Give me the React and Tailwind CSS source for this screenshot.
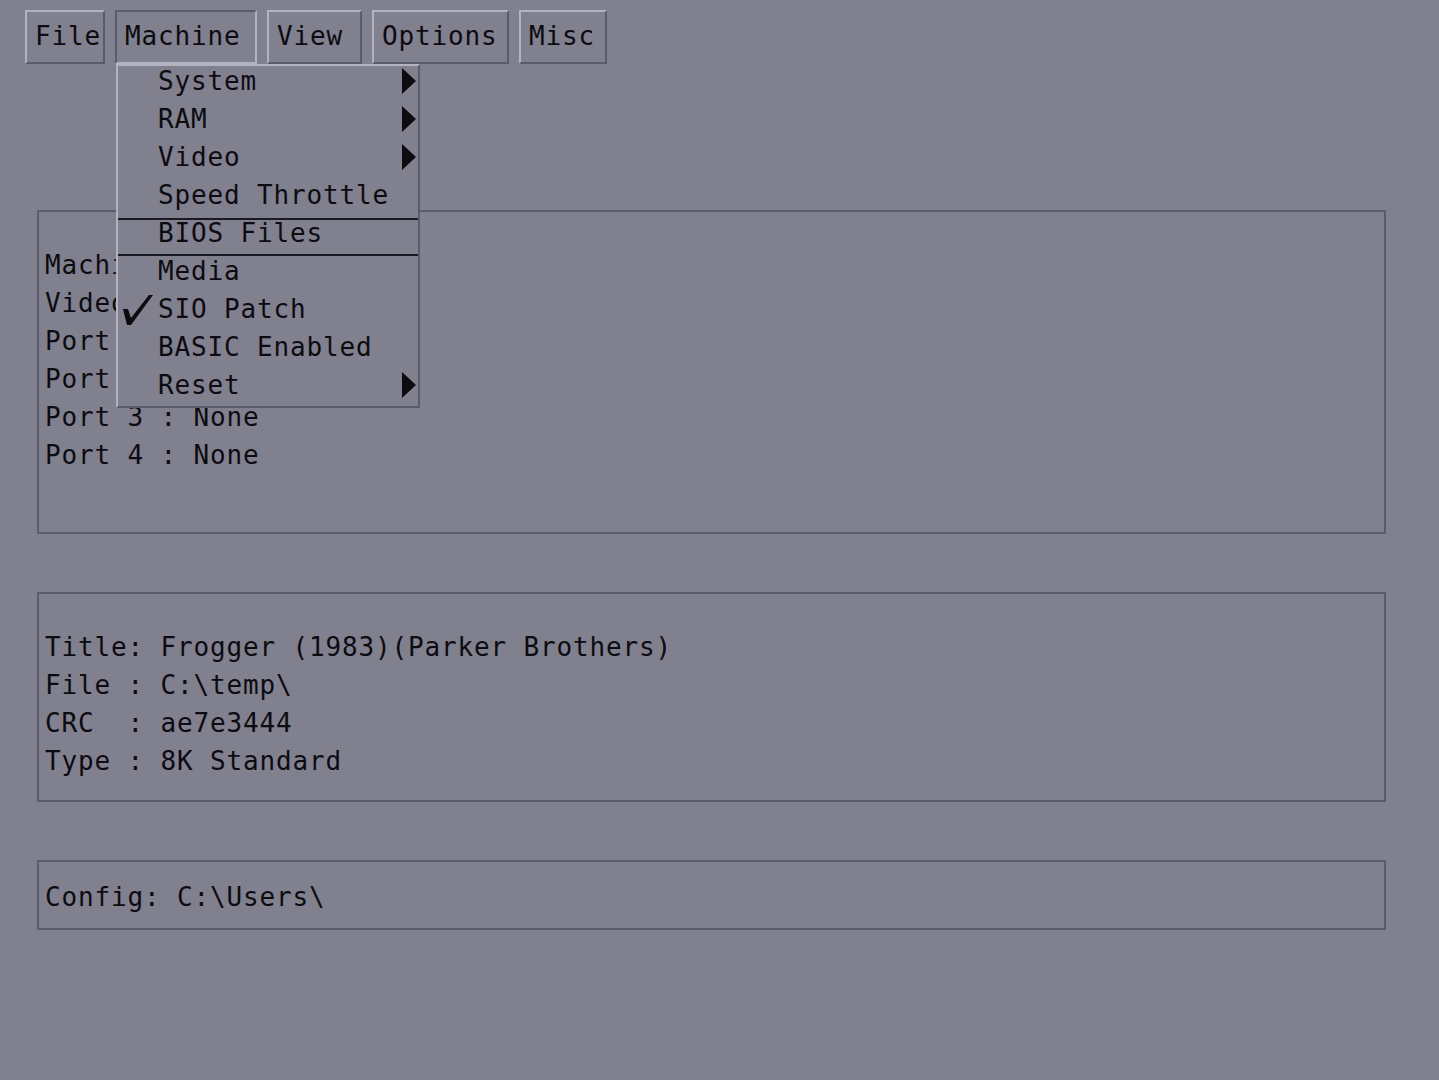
const font = { fontFamily: '"DejaVu Sans Mono", "Liberation Mono", monospace' };

const menus = [
  { label: "File", w: "w-[80px]" },
  { label: "Machine", w: "w-[142px]", open: true },
  { label: "View", w: "w-[95px]" },
  { label: "Options", w: "w-[137px]" },
  { label: "Misc", w: "w-[88px]" },
];

const items = [
  { label: "System", sub: true },
  { label: "RAM", sub: true },
  { label: "Video", sub: true },
  { label: "Speed Throttle" },
  { label: "BIOS Files", active: true },
  { label: "Media" },
  { label: "SIO Patch", checked: true },
  { label: "BASIC Enabled" },
  { label: "Reset", sub: true },
];

function Arrow() {
  return (
    <svg width="14" height="26" viewBox="0 0 14 26" className="absolute right-[2px] top-[2px]">
      <polygon points="0,0 14,13 0,26" fill="#0c0c10" />
    </svg>
  );
}

function Check() {
  return (
    <svg width="34" height="34" viewBox="0 0 34 34" className="absolute left-[2px] top-[-2px]">
      <polygon points="3,17 8,17 11,26 29,3 33,3 11,33 7,33" fill="#0c0c10" />
    </svg>
  );
}

function Panel({ className, lines }) {
  return (
    <div className={`ml-[37px] w-[1349px] border-2 border-[#5b5b6c] pl-[6px] ${className}`}>
      {lines.map((l) => (
        <div key={l} className="h-[38px] leading-[38px] whitespace-pre">
          {l}
        </div>
      ))}
    </div>
  );
}

export default function App() {
  return (
    <div
      className="relative w-[1439px] h-[1080px] overflow-hidden bg-[#80808f] text-[26px] tracking-[0.85px] text-[#0c0c10]"
      style={font}
    >
      <div className="flex pt-[10px] pl-[25px] gap-[10px]">
        {menus.map((m) => (
          <div
            key={m.label}
            className={`${m.w} h-[54px] border-2 pl-[8px] leading-[48px] ${
              m.open
                ? "border-t-[#5b5b6c] border-l-[#5b5b6c] border-b-[#b2b2c2] border-r-[#b2b2c2]"
                : "border-t-[#b2b2c2] border-l-[#b2b2c2] border-b-[#5b5b6c] border-r-[#5b5b6c]"
            }`}
          >
            {m.label}
          </div>
        ))}
      </div>

      <div className="flex flex-col gap-[58px] pt-[146px]">
        <Panel
          className="h-[324px] pt-[34px]"
          lines={[
            "Machine: Atari 800XL",
            "Video  : NTSC",
            "Port 1 : Joystick",
            "Port 2 : None",
            "Port 3 : None",
            "Port 4 : None",
          ]}
        />
        <Panel
          className="h-[210px] pt-[34px]"
          lines={[
            "Title: Frogger (1983)(Parker Brothers)",
            "File : C:\\temp\\",
            "CRC  : ae7e3444",
            "Type : 8K Standard",
          ]}
        />
        <Panel className="h-[70px] pt-[16px]" lines={["Config: C:\\Users\\"]} />
      </div>

      <div className="absolute left-[116px] top-[64px] w-[304px] h-[344px] border-2 border-t-[#b2b2c2] border-l-[#b2b2c2] border-b-[#5b5b6c] border-r-[#5b5b6c] bg-[#80808f]">
        {items.map((it) => (
          <div
            key={it.label}
            className={`relative h-[38px] pl-[40px] ${
              it.active ? "border-y-2 border-[#1a1a22] leading-[26px]" : "leading-[30px]"
            }`}
          >
            {it.checked && <Check />}
            {it.label}
            {it.sub && <Arrow />}
          </div>
        ))}
      </div>
    </div>
  );
}
